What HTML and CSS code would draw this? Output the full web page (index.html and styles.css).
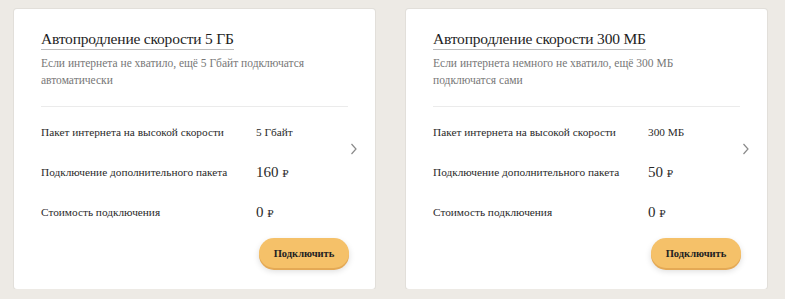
FILE: index.html
```html
<!DOCTYPE html>
<html>
	<head>
		<meta charset="utf-8" />
		<meta name="viewport" content="width=device-width, initial-scale=1">
		<title>Автопродление скорости</title>
		<link rel="stylesheet" href="styles.css">
	</head>
	<body>
		<div class="cards">
			<div class="card">
				<div class="head">
					<div class="title"><span>Автопродление скорости 5 ГБ</span></div>
					<p class="desc">Если интернета не хватило, ещё 5 Гбайт подключатся автоматически</p>
				</div>
				<div class="rows">
					<div class="row">
						<span class="label">Пакет интернета на высокой скорости</span>
						<span class="value">5 Гбайт</span>
					</div>
					<div class="row">
						<span class="label">Подключение дополнительного пакета</span>
						<span class="value big">160 <i class="rub">₽</i></span>
					</div>
					<div class="row">
						<span class="label">Стоимость подключения</span>
						<span class="value big">0 <i class="rub">₽</i></span>
					</div>
				</div>
				<div class="actions">
					<button class="btn">Подключить</button>
				</div>
				<svg class="arrow" width="8" height="12" viewBox="0 0 8 12">
					<polyline points="1.5,1 6,6 1.5,11" fill="none" stroke="#8a8a8a" stroke-width="1.2" />
				</svg>
			</div>
			<div class="card">
				<div class="head">
					<div class="title"><span>Автопродление скорости 300 МБ</span></div>
					<p class="desc">Если интернета немного не хватило, ещё 300 МБ подключатся сами</p>
				</div>
				<div class="rows">
					<div class="row">
						<span class="label">Пакет интернета на высокой скорости</span>
						<span class="value">300 МБ</span>
					</div>
					<div class="row">
						<span class="label">Подключение дополнительного пакета</span>
						<span class="value big">50 <i class="rub">₽</i></span>
					</div>
					<div class="row">
						<span class="label">Стоимость подключения</span>
						<span class="value big">0 <i class="rub">₽</i></span>
					</div>
				</div>
				<div class="actions">
					<button class="btn">Подключить</button>
				</div>
				<svg class="arrow" width="8" height="12" viewBox="0 0 8 12">
					<polyline points="1.5,1 6,6 1.5,11" fill="none" stroke="#8a8a8a" stroke-width="1.2" />
				</svg>
			</div>
		</div>
	</body>
</html>
```

FILE: styles.css
```css
* {
	padding: 0;
	margin: 0;
	box-sizing: border-box;
}

body {
	background-color: #edeae5;
	font-family: "Liberation Serif", "DejaVu Serif", serif;
	color: #222;
}

.cards {
	display: flex;
	gap: 31px;
	padding: 9px 0 0 14px;
}

.card {
	position: relative;
	width: 361px;
	height: 280px;
	background-color: #fff;
	border-radius: 3px;
	box-shadow: 0 0 0 1px #e2dfda;
	padding: 20px 27px 0 27px;
}

.head {
	padding-bottom: 17px;
	border-bottom: 1px solid #ebebeb;
}

.title {
	font-size: 15.5px;
	letter-spacing: -0.2px;
	line-height: 20px;
	color: #1e1e1e;
}

.title span {
	display: inline-block;
	border-bottom: 1px solid #bdbdbd;
}

.desc {
	margin-top: 5px;
	max-width: 275px;
	font-size: 11.5px;
	line-height: 17px;
	color: #777;
}

.rows {
	padding-top: 5px;
}

.row {
	display: flex;
	align-items: center;
	height: 40px;
	font-size: 11.3px;
}

.label {
	width: 215px;
	color: #2a2a2a;
}

.value {
	color: #2a2a2a;
}

.value.big {
	font-size: 15px;
}

.rub {
	font-style: normal;
	font-size: 10px;
}

.actions {
	display: flex;
	justify-content: flex-end;
	margin-top: 6px;
	margin-right: -1px;
}

.btn {
	width: 90px;
	height: 30px;
	border: none;
	border-radius: 15px;
	background-color: #f5c169;
	box-shadow: 0 2px 0 #e4a955, 0 3px 6px rgba(0, 0, 0, 0.15);
	font-family: "Liberation Serif", "DejaVu Serif", serif;
	font-size: 10.5px;
	font-weight: bold;
	color: #222;
	cursor: pointer;
}

.arrow {
	position: absolute;
	left: 336px;
	top: 134px;
}
```
